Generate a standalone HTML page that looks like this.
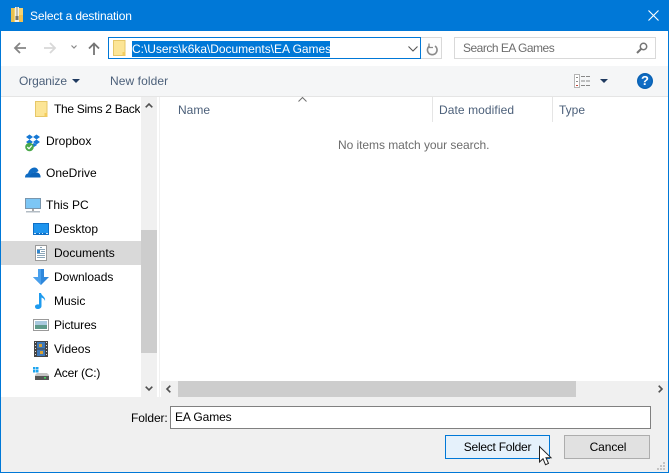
<!DOCTYPE html>
<html><head><meta charset="utf-8"><style>
html,body{margin:0;padding:0;width:669px;height:473px;overflow:hidden;background:#fff}
body{position:relative;font:12px/16px "Liberation Sans",sans-serif;color:#000}
.a{position:absolute}
.t{position:absolute;white-space:nowrap;line-height:16px}
svg{position:absolute;overflow:visible}
.h{color:#4c607a}
</style></head><body>
<!-- frame -->
<div class="a" style="left:0;top:0;width:669px;height:31px;background:#0078d7"></div>
<div class="a" style="left:0;top:0;width:1px;height:473px;background:#0078d7"></div>
<div class="a" style="left:668px;top:0;width:1px;height:473px;background:#0078d7"></div>
<div class="a" style="left:0;top:472px;width:669px;height:1px;background:#0078d7"></div>
<svg style="left:11px;top:7px" width="12" height="15"><path d="M0 1h12v14H0z" fill="#f6d36f"/><path d="M0 1h3v14H0z" fill="#e8c04f"/><path d="M4 0h4v15H4z" fill="#f3f0e4"/><path d="M5.500 0h1v9h-1z" fill="#8f8a78"/><path d="M4.500 9h3v4h-3z" fill="#77756c"/><path d="M8 8h4v7H8z" fill="#f2c14e"/></svg>
<div class="t" style="left:30px;top:8px;color:#fff;letter-spacing:-.15px">Select a destination</div>
<svg style="left:648px;top:10px" width="11" height="11"><path d="M.5.500l10 10M10.500.500l-10 10" stroke="#fff" stroke-width="1.100" fill="none"/></svg>

<!-- nav toolbar -->
<svg style="left:14px;top:42px" width="12" height="12"><path d="M12 6H1.500M6 1L1 6l5 5" stroke="#858585" stroke-width="1.800" fill="none"/></svg>
<svg style="left:44px;top:42px" width="12" height="12"><path d="M0 6h10.500M6 1l5 5-5 5" stroke="#d8d8d8" stroke-width="1.800" fill="none"/></svg>
<svg style="left:71px;top:45px" width="6" height="4"><path d="M.5.500L3 3l2.500-2.500" stroke="#8a8a8a" stroke-width="1.200" fill="none"/></svg>
<svg style="left:88px;top:42px" width="12" height="13"><path d="M6 13V2M1 6.500l5-5 5 5" stroke="#757575" stroke-width="1.800" fill="none"/></svg>
<div class="a" style="left:108px;top:37px;width:311px;height:20px;border:1px solid #0078d7;background:#fff"></div>
<svg style="left:113px;top:40px" width="13" height="16"><path d="M.5.500h11.500v15H.5z" fill="#fce596" stroke="#e6c768"/><path d="M9.500 12h3v3.500h-3z" fill="#f4cd5e"/></svg>
<div class="a" style="left:132px;top:41px;width:198px;height:16px;background:#0078d7"></div>
<div class="t" style="left:132px;top:41px;color:#fff;width:198px;letter-spacing:-.03px">C:\Users\k6ka\Documents\EA Games</div>
<svg style="left:408px;top:46px" width="10" height="6"><path d="M.5.500L5 5 9.500.500" stroke="#555" stroke-width="1.100" fill="none"/></svg>
<div class="a" style="left:421px;top:37px;height:20px;border:1px solid #d9d9d9;border-left:0;background:#fdfdfd;width:20px"></div>
<svg style="left:426px;top:43px" width="12" height="13"><path d="M3.500 3A4.800 4.800 0 1 0 9 3" stroke="#8a8a8a" stroke-width="1.600" fill="none"/><path d="M3 .5v4h4" stroke="#8a8a8a" stroke-width="1.300" fill="none"/></svg>
<div class="a" style="left:454px;top:37px;width:200px;height:20px;border:1px solid #d9d9d9;background:#fff"></div>
<div class="t" style="left:463px;top:40px;color:#6d6d6d;letter-spacing:-.5px">Search EA Games</div>
<svg style="left:636px;top:42px" width="12" height="12"><circle cx="7.500" cy="4.500" r="3.200" stroke="#757575" stroke-width="1.500" fill="none"/><path d="M5 7l-4 4" stroke="#757575" stroke-width="2"/></svg>

<!-- command bar -->
<div class="a" style="left:1px;top:66px;width:667px;height:30px;background:#f5f6f7"></div>
<div class="a" style="left:1px;top:96px;width:667px;height:1px;background:#e5e5e5"></div>
<div class="t h" style="left:19px;top:73px;letter-spacing:-.1px">Organize</div>
<svg style="left:72px;top:79px" width="8" height="4"><path d="M0 0h8L4 4z" fill="#1f3a60"/></svg>
<div class="t h" style="left:110px;top:73px;letter-spacing:.08px">New folder</div>
<svg style="left:574px;top:74px" width="17" height="14"><rect x=".5" y=".5" width="5" height="13" fill="#fff" stroke="#b5b5b5"/><path d="M2 3h2v1H2zM2 7h2v1H2z" fill="#8a8a8a"/><path d="M2 11h2v1H2z" fill="#c14a3c"/><path d="M7 2h4v1H7zM12 2h4v1h-4zM7 6.500h4v1H7zM12 6.500h4v1h-4zM7 11h4v1H7zM12 11h4v1h-4z" fill="#888"/></svg>
<svg style="left:600px;top:79px" width="8" height="4"><path d="M0 0h8L4 4z" fill="#1f3a60"/></svg>
<svg style="left:637px;top:73px" width="16" height="16"><circle cx="8" cy="8" r="8" fill="#0a62b4"/><circle cx="8" cy="8" r="6.500" fill="#0f6cc4"/></svg>
<div class="t" style="left:637px;top:73px;width:16px;text-align:center;color:#fff;font-weight:bold;font-size:13px">?</div>

<!-- nav pane -->
<div class="a" style="left:1px;top:241px;width:140px;height:24px;background:#d9d9d9"></div>
<svg style="left:35px;top:101px" width="13" height="16"><path d="M.5.500h11.500v15H.5z" fill="#fce596" stroke="#e6c768"/><path d="M9.500 12h3v3.500h-3z" fill="#f4cd5e"/></svg>
<div class="t" style="left:54px;top:101px;width:86px;overflow:hidden;letter-spacing:-.3px">The Sims 2 Back</div>
<svg style="left:25px;top:134px" width="16" height="18"><path d="M1 3l3.500-2.500L8 3 4.500 5.500zM8 3l3.500-2.500L15 3l-3.500 2.500zM1 8l3.500-2.500L8 8l-3.500 2.500zM8 8l3.500-2.500L15 8l-3.500 2.500zM6 11l3-2 3 2-3 2z" fill="#1678d4"/><circle cx="4.500" cy="13" r="4.300" fill="#4aa84a"/><path d="M2.300 13l1.700 1.700 2.800-3.200" stroke="#fff" stroke-width="1.300" fill="none"/></svg>
<div class="t" style="left:46px;top:133px">Dropbox</div>
<svg style="left:25px;top:167px" width="16" height="11"><path d="M0 10.500C0 7.500 2 6.500 3 6.500 4 2.500 7 .5 9.500.5c2.500 0 3.500 2 4 3.500L11 5.500C9 5 6 6 5.500 10.500z" fill="#0f6cc4"/><path d="M4.500 10.500C5 7 8 5 11 5.500c3-.5 5 2.500 4.500 5z" fill="#0a62b8"/></svg>
<div class="t" style="left:46px;top:165px">OneDrive</div>
<svg style="left:25px;top:198px" width="16" height="15"><rect x=".5" y=".5" width="15" height="10" fill="#8fd0f8" stroke="#7a96ad"/><rect x="1" y="1" width="14" height="9" fill="#7cc6f5"/><path d="M7 11h2v2H7z" fill="#a8a8a8"/><path d="M1 13h14v1.500H1z" fill="#b3bcc4"/></svg>
<div class="t" style="left:46px;top:197px">This PC</div>
<svg style="left:33px;top:223px" width="16" height="12"><rect width="16" height="12" fill="#0e6fc6"/><rect x="1" y="1" width="14" height="9" fill="#1f95ee"/><path d="M1 10.500h2M6 10.500h1M9 10.500h1M13 10.500h2" stroke="#cfe8fa"/></svg>
<div class="t" style="left:54px;top:221px">Desktop</div>
<svg style="left:35px;top:245px" width="12" height="16"><path d="M.5.500h11v15H.5z" fill="#fff" stroke="#9a9a9a"/><path d="M5 2h2v1H5zM2 4h8v1H2zM6 6h4v1H6zM2 8h8v1H2zM2 10h8v1H2zM2 12h8v1H2z" fill="#8aa5b8"/><path d="M2 5h3v3H2z" fill="#2e86d0"/></svg>
<div class="t" style="left:54px;top:245px">Documents</div>
<svg style="left:33px;top:269px" width="16" height="16"><path d="M5 0h6v8h5l-8 8-8-8h5z" fill="#2f88dc"/><path d="M5 0h3v16l-8-8h5z" fill="#4aa0ec"/></svg>
<div class="t" style="left:54px;top:269px">Downloads</div>
<svg style="left:35px;top:293px" width="11" height="16"><path d="M4 0h2c.5 3 5 4 4 8-.5-2-2-3-3.500-3.500v8.500C6.500 15 4.500 16 2.800 16 1 16 0 15 0 13.500 0 12 2 11 4 11.500z" fill="#1e9bef"/></svg>
<div class="t" style="left:54px;top:293px">Music</div>
<svg style="left:33px;top:319px" width="16" height="12"><rect x=".5" y=".5" width="15" height="11" fill="#fff" stroke="#9a9a9a"/><rect x="2" y="2" width="12" height="4" fill="#a9c9de"/><rect x="2" y="6" width="12" height="4" fill="#5e9a8a"/></svg>
<div class="t" style="left:54px;top:317px;letter-spacing:-.1px">Pictures</div>
<svg style="left:34px;top:341px" width="14" height="16"><rect width="14" height="16" fill="#444"/><path d="M1 1h1v1H1zM1 4h1v1H1zM1 7h1v1H1zM1 10h1v1H1zM1 13h1v1H1zM12 1h1v1h-1zM12 4h1v1h-1zM12 7h1v1h-1zM12 10h1v1h-1zM12 13h1v1h-1z" fill="#ddd"/><rect x="3" y="1" width="8" height="6.500" fill="#3e78b8"/><rect x="3" y="8.500" width="8" height="6.500" fill="#3e78b8"/><path d="M5 3h3v3H5zM6 10h3v3H6z" fill="#d9a030"/></svg>
<div class="t" style="left:54px;top:341px">Videos</div>
<svg style="left:33px;top:367px" width="16" height="13"><path d="M0 0h2.500v2.500H0zM3 0h2.500v2.500H3zM0 3h2.500v2.500H0zM3 3h2.500v2.500H3z" fill="#1fa5ef"/><path d="M2 8l2-2h10l2 2v5H2z" fill="#c4c4c4"/><rect x="2" y="9" width="14" height="4" fill="#555"/><rect x="11" y="10" width="2" height="1.500" fill="#3fd65a"/></svg>
<div class="t" style="left:54px;top:365px;letter-spacing:-.2px">Acer (C:)</div>

<!-- nav scrollbar -->
<div class="a" style="left:141px;top:97px;width:16px;height:300px;background:#f0f0f0"></div>
<div class="a" style="left:141px;top:230px;width:16px;height:123px;background:#cdcdcd"></div>
<svg style="left:145px;top:103px" width="8" height="5"><path d="M.7 4.300L4 1l3.300 3.300" stroke="#505050" stroke-width="1.600" fill="none"/></svg>
<svg style="left:145px;top:386px" width="8" height="5"><path d="M.7.700L4 4 7.300.700" stroke="#505050" stroke-width="1.600" fill="none"/></svg>
<div class="a" style="left:159px;top:97px;width:1px;height:300px;background:#f0f0f0"></div>

<!-- list -->
<svg style="left:298px;top:97px" width="9" height="5"><path d="M.5 4.500L4.500.5l4 4" stroke="#707070" fill="none"/></svg>
<div class="t h" style="left:178px;top:102px">Name</div>
<div class="a" style="left:432px;top:97px;width:1px;height:25px;background:#e5e5e5"></div>
<div class="t h" style="left:439px;top:102px;letter-spacing:.08px">Date modified</div>
<div class="a" style="left:552px;top:97px;width:1px;height:25px;background:#e5e5e5"></div>
<div class="t h" style="left:559px;top:102px">Type</div>
<div class="t" style="left:338px;top:137px;color:#6d6d6d;letter-spacing:-.05px">No items match your search.</div>

<!-- h scrollbar -->
<div class="a" style="left:161px;top:381px;width:507px;height:16px;background:#f0f0f0"></div>
<div class="a" style="left:178px;top:381px;width:398px;height:16px;background:#cdcdcd"></div>
<svg style="left:166px;top:385px" width="5" height="8"><path d="M4.300.7L1 4l3.300 3.300" stroke="#505050" stroke-width="1.600" fill="none"/></svg>
<svg style="left:658px;top:385px" width="5" height="8"><path d="M.7.700L4 4 .7 7.300" stroke="#505050" stroke-width="1.600" fill="none"/></svg>

<!-- bottom -->
<div class="a" style="left:1px;top:397px;width:667px;height:75px;background:#f0f0f0"></div>
<div class="t" style="left:131px;top:410px;letter-spacing:-.1px">Folder:</div>
<div class="a" style="left:170px;top:406px;width:479px;height:21px;border:1px solid #808080;background:#fff"></div>
<div class="t" style="left:175px;top:409px;letter-spacing:-.1px">EA Games</div>
<div class="a" style="left:445px;top:435px;width:103px;height:22px;border:1px solid #0078d7;background:#e5f1fb"></div>
<div class="t" style="left:445px;top:439px;width:105px;text-align:center;letter-spacing:-.25px">Select Folder</div>
<div class="a" style="left:564px;top:435px;width:84px;height:22px;border:1px solid #adadad;background:#e1e1e1"></div>
<div class="t" style="left:565px;top:439px;width:86px;text-align:center;letter-spacing:-.1px">Cancel</div>
<svg style="left:539px;top:446px" width="13" height="21"><path d="M.5.500v15.500l3.500-3.300 2.500 6 3-1.300-2.500-5.700h5z" fill="#fff" stroke="#222" stroke-width="1"/></svg>
<svg style="left:657px;top:462px" width="10" height="10"><path d="M6 0h2v2H6zM3 3h2v2H3zM6 3h2v2H6zM0 6h2v2H0zM3 6h2v2H3zM6 6h2v2H6z" fill="#c4c4c4"/></svg>
</body></html>
